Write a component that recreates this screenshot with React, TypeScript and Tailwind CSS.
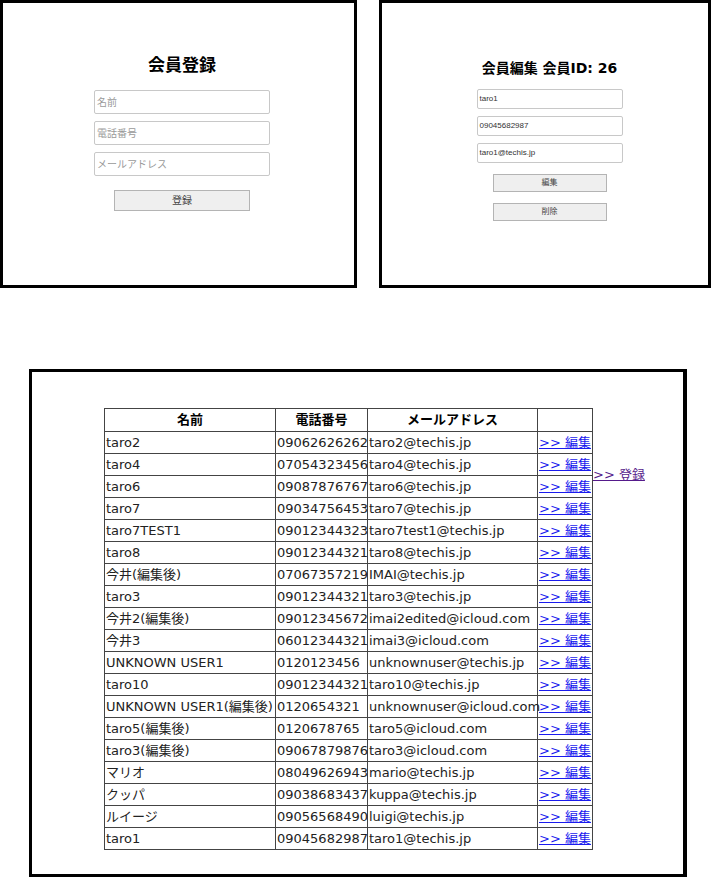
const members = [
  ["taro2", "09062626262", "taro2@techis.jp"],
  ["taro4", "07054323456", "taro4@techis.jp"],
  ["taro6", "09087876767", "taro6@techis.jp"],
  ["taro7", "09034756453", "taro7@techis.jp"],
  ["taro7TEST1", "09012344323", "taro7test1@techis.jp"],
  ["taro8", "09012344321", "taro8@techis.jp"],
  ["今井(編集後)", "07067357219", "IMAI@techis.jp"],
  ["taro3", "09012344321", "taro3@techis.jp"],
  ["今井2(編集後)", "09012345672", "imai2edited@icloud.com"],
  ["今井3", "06012344321", "imai3@icloud.com"],
  ["UNKNOWN USER1", "0120123456", "unknownuser@techis.jp"],
  ["taro10", "09012344321", "taro10@techis.jp"],
  ["UNKNOWN USER1(編集後)", "0120654321", "unknownuser@icloud.com"],
  ["taro5(編集後)", "0120678765", "taro5@icloud.com"],
  ["taro3(編集後)", "09067879876", "taro3@icloud.com"],
  ["マリオ", "08049626943", "mario@techis.jp"],
  ["クッパ", "09038683437", "kuppa@techis.jp"],
  ["ルイージ", "09056568490", "luigi@techis.jp"],
  ["taro1", "09045682987", "taro1@techis.jp"],
];

const tableFont = "font-['DejaVu_Sans','Noto_Sans_CJK_JP',sans-serif]";
const formFont = "font-['Liberation_Sans','Noto_Sans_CJK_JP',sans-serif]";

function RegisterPanel() {
  return (
    <div className={`flex h-[288px] w-[357px] shrink-0 flex-col items-center border-[3px] border-black pt-[50px] pl-[7px] ${formFont}`}>
      <h1 className="text-[17px] leading-6 font-bold text-black font-['DejaVu_Sans','Noto_Sans_CJK_JP',sans-serif]">
        会員登録
      </h1>
      <div className="mt-[13px] flex flex-col gap-[7px]">
        {["名前", "電話番号", "メールアドレス"].map((p) => (
          <div
            key={p}
            className="flex h-[24px] w-[176px] items-center rounded-[2px] border border-[#c8c8c8] px-[2px] text-[10px] text-[#9a9a9a]"
          >
            {p}
          </div>
        ))}
      </div>
      <div className="mt-[14px] flex h-[21px] w-[136px] items-center justify-center border border-[#b4b4b4] bg-[#efefef] text-[10px] text-[#444]">
        登録
      </div>
    </div>
  );
}

function EditPanel() {
  return (
    <div className={`flex h-[288px] w-[332px] shrink-0 flex-col items-center border-[3px] border-black pt-[55px] pl-[9px] ${formFont}`}>
      <h1 className="text-[14px] leading-5 font-bold text-black font-['DejaVu_Sans','Noto_Sans_CJK_JP',sans-serif]">
        会員編集 会員ID: 26
      </h1>
      <div className="mt-[11px] flex flex-col gap-[7px]">
        {["taro1", "09045682987", "taro1@techis.jp"].map((v) => (
          <div
            key={v}
            className="flex h-[20px] w-[146px] items-center rounded-[2px] border border-[#c8c8c8] px-[2px] text-[8px] text-[#333]"
          >
            {v}
          </div>
        ))}
      </div>
      <div className="mt-[11px] flex flex-col gap-[11px]">
        {["編集", "削除"].map((b) => (
          <div
            key={b}
            className="flex h-[18px] w-[114px] items-center justify-center border border-[#b4b4b4] bg-[#efefef] text-[8px] text-[#444]"
          >
            {b}
          </div>
        ))}
      </div>
    </div>
  );
}

function MemberTable() {
  return (
    <div className={`flex pl-[72px] pt-[36px] ${tableFont}`}>
      <table className="w-[488px] table-fixed border-collapse border border-black text-[13px] text-[#222]">
        <colgroup>
          <col className="w-[171px]" />
          <col className="w-[92px]" />
          <col className="w-[170px]" />
          <col className="w-[55px]" />
        </colgroup>
        <thead>
          <tr className="h-[23px]">
            <th className="border border-[#444] font-bold text-black">名前</th>
            <th className="border border-[#444] font-bold text-black">電話番号</th>
            <th className="border border-[#444] font-bold text-black">メールアドレス</th>
            <th className="border border-[#444]"></th>
          </tr>
        </thead>
        <tbody>
          {members.map(([name, tel, mail], i) => (
            <tr key={i} className="h-[22px]">
              <td className="border border-[#444] px-px whitespace-nowrap">{name}</td>
              <td className="border border-[#444] px-px whitespace-nowrap">{tel}</td>
              <td className="border border-[#444] px-px whitespace-nowrap">{mail}</td>
              <td className="border border-[#444] px-px whitespace-nowrap">
                <a href="#" className="text-[#1a1aee] underline">
                  &gt;&gt; 編集
                </a>
              </td>
            </tr>
          ))}
        </tbody>
      </table>
      <a href="#" className="mt-[59px] self-start text-[13px] leading-4 whitespace-nowrap text-[#551a8b] underline">
        &gt;&gt; 登録
      </a>
    </div>
  );
}

export default function App() {
  return (
    <div className="min-h-[877px] w-[713px] bg-white">
      <div className="flex gap-[22px]">
        <RegisterPanel />
        <EditPanel />
      </div>
      <div className="mt-[81px] ml-[29px] h-[508px] w-[658px] border-[3px] border-r-4 border-black">
        <MemberTable />
      </div>
    </div>
  );
}
